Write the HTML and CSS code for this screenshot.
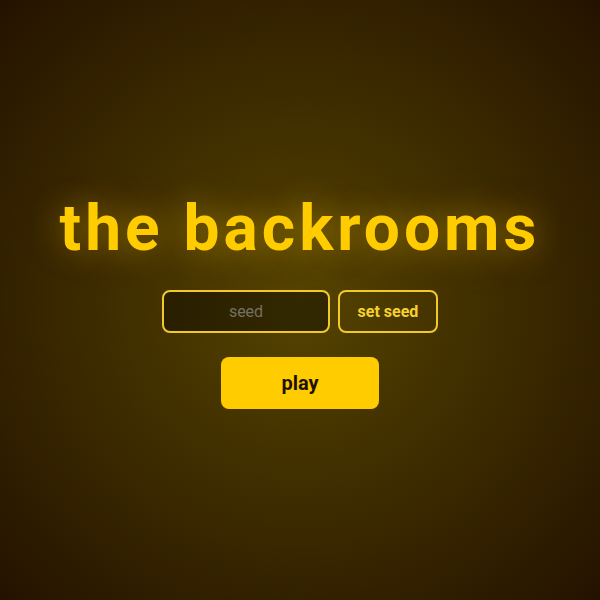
FILE: index.html
```html
<!DOCTYPE html>
<html lang="en">
<head>
<meta charset="utf-8">
<meta name="viewport" content="width=device-width, initial-scale=1">
<title>the backrooms</title>
<link rel="stylesheet" href="styles.css">
</head>
<body>
<main class="menu">
  <h1 class="title">the backrooms</h1>
  <form class="seed-form">
    <input class="seed-input" type="text" placeholder="seed" aria-label="seed">
    <button class="seed-button" type="button">set seed</button>
  </form>
  <button class="play-button" type="button">play</button>
</main>
</body>
</html>
```
FILE: styles.css
```css
* {
  box-sizing: border-box;
}

body {
  margin: 0;
  min-height: 100vh;
  font-family: Roboto, sans-serif;
  background: radial-gradient(circle at center, #554400 0%, #241200 100%);
}

.menu {
  min-height: 100vh;
  display: flex;
  flex-direction: column;
  align-items: center;
  justify-content: center;
}

.title {
  margin: 0 0 24px;
  font-size: 64px;
  line-height: 75px;
  font-weight: 700;
  letter-spacing: 4px;
  color: #ffcc00;
  text-shadow:
    0 0 32px rgba(255, 204, 0, 0.4),
    0 0 64px rgba(255, 204, 0, 0.15);
  white-space: nowrap;
}

.seed-form {
  display: flex;
  gap: 8px;
  margin-bottom: 24px;
}

.seed-input,
.seed-button {
  height: 43px;
  border: 2px solid #f2c92b;
  border-radius: 8px;
  font: 16px Roboto, sans-serif;
}

.seed-input {
  width: 168px;
  padding: 0 12px;
  text-align: center;
  color: #ffcc00;
  background: rgba(0, 0, 0, 0.4);
}

.seed-input::placeholder {
  color: #757060;
}

.seed-button {
  width: 100px;
  padding: 0;
  font-weight: 700;
  color: #f8d030;
  background: transparent;
}

.play-button {
  width: 158px;
  height: 52px;
  border: 0;
  border-radius: 8px;
  font: 700 20px Roboto, sans-serif;
  color: #221100;
  background: #ffcc00;
}
```
